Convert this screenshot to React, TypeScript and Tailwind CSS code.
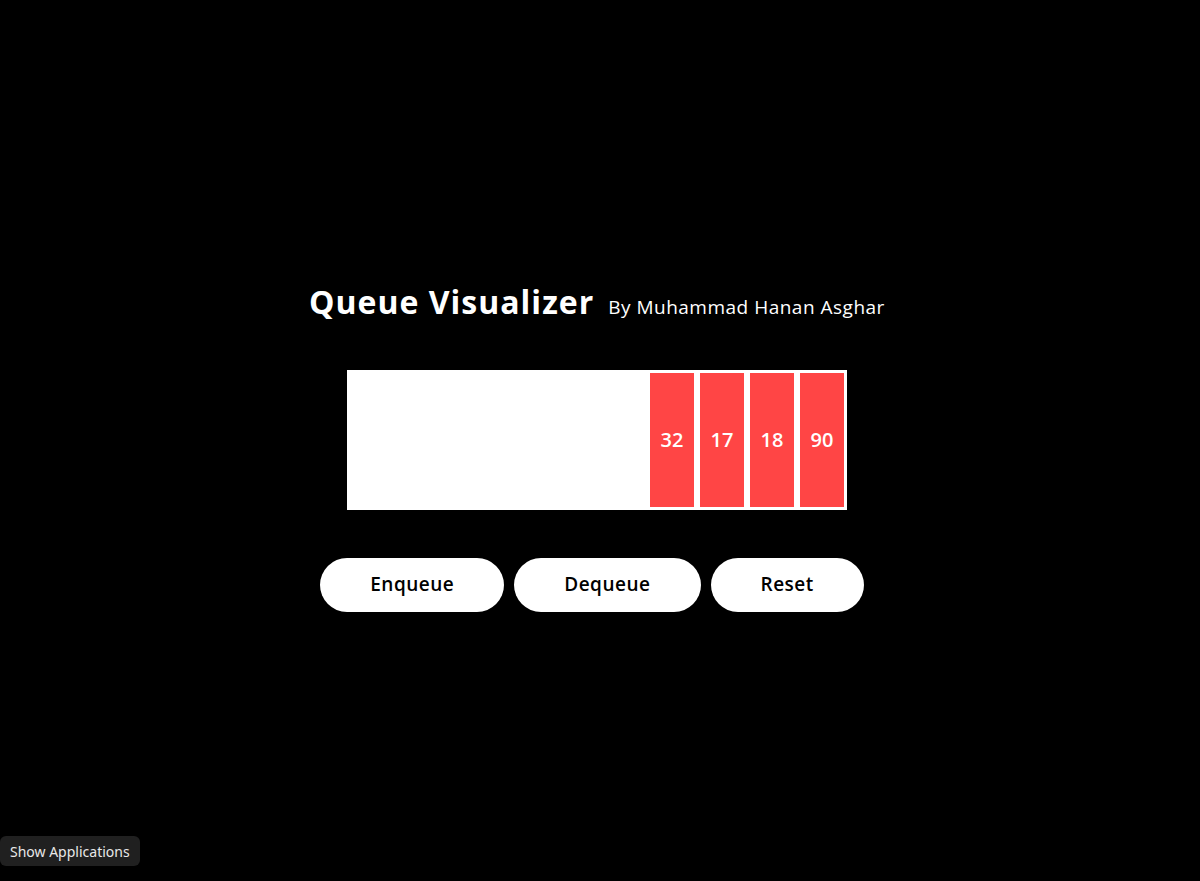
import React from "react";

export default function App() {
  const items = [32, 17, 18, 90];
  return (
    <div className="relative h-screen w-full bg-black" style={{ fontFamily: "'Open Sans', Lato, sans-serif" }}>
      <div className="flex h-full flex-col items-center justify-center pr-[6px] pt-[12px]">
        <div className="flex items-baseline gap-[14px] text-white">
          <h1 className="text-[32px] font-bold leading-[40px] tracking-[1px]">Queue Visualizer</h1>
          <span className="text-[19px] leading-[24px] tracking-[0.5px]">By Muhammad Hanan Asghar</span>
        </div>
        <div className="mt-[48px] flex h-[140px] w-[500px] justify-end gap-[6px] bg-white p-[3px]">
          {items.map((n) => (
            <div key={n} className="flex w-[44px] items-center justify-center bg-[#ff4545] text-[20px] font-semibold text-white">
              {n}
            </div>
          ))}
        </div>
        <div className="mr-[10px] mt-[48px] flex gap-[10px]">
          {["Enqueue", "Dequeue", "Reset"].map((t) => (
            <button key={t} className="h-[54px] rounded-full bg-white px-[50px] text-[19px] font-semibold tracking-[0.5px] text-black">
              {t}
            </button>
          ))}
        </div>
      </div>
      <div
        className="absolute bottom-[15px] left-0 flex h-[30px] items-center rounded-[6px] bg-[#202020] px-[10px] text-[14px] text-[#e8e8e8]"
        style={{ fontFamily: "'Noto Sans', sans-serif" }}
      >
        Show Applications
      </div>
    </div>
  );
}
